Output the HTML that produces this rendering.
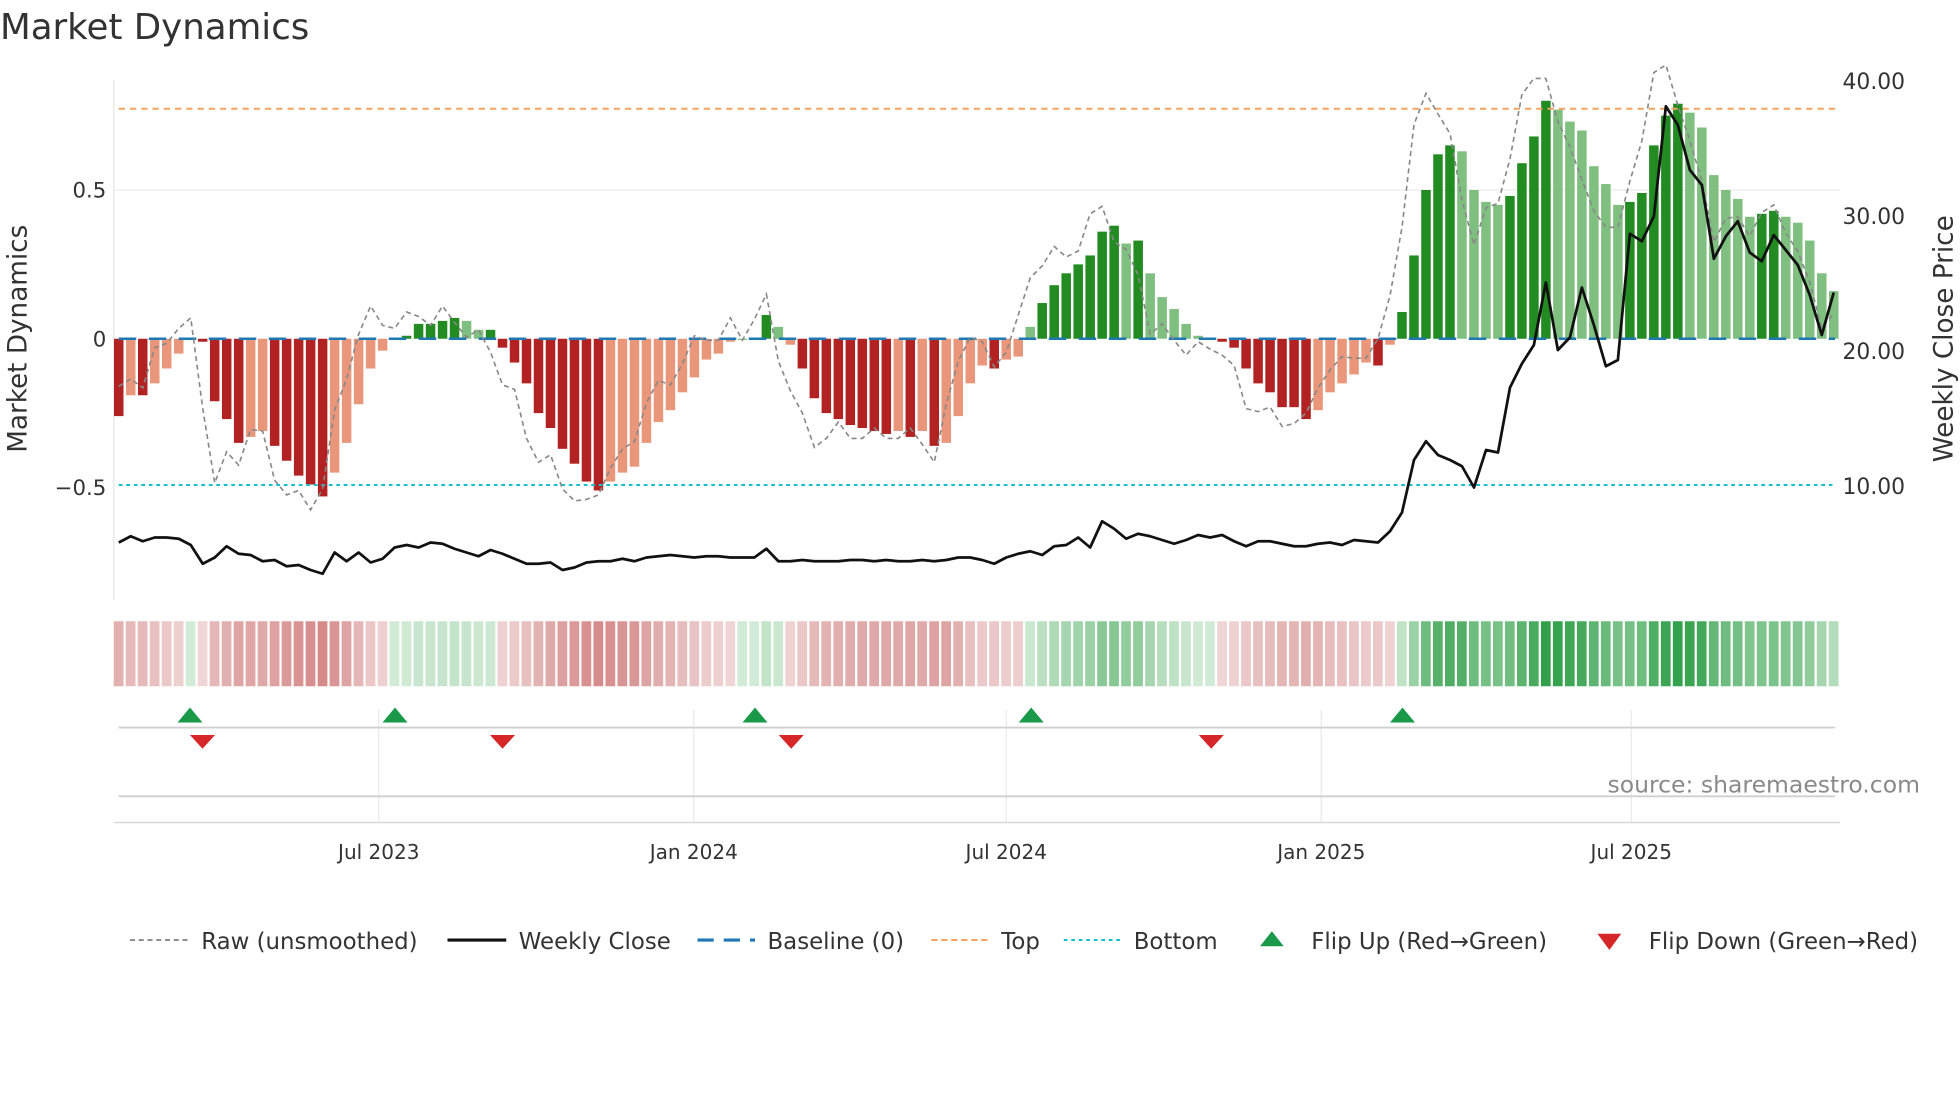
<!DOCTYPE html>
<html><head><meta charset="utf-8"><style>
html,body{margin:0;padding:0;background:#fff;width:1960px;height:1102px;overflow:hidden}
svg{display:block}
text{font-family:"DejaVu Sans","Liberation Sans",sans-serif;fill:#333}
</style></head><body>
<svg id="s" width="1960" height="1102" viewBox="0 0 1568 881.6" xmlns="http://www.w3.org/2000/svg">
<rect width="1568" height="882" fill="#fff"/>
<text x="0" y="31" font-size="28.5">Market Dynamics</text>
<line x1="91" y1="64" x2="91" y2="480" stroke="#e6e6e6" stroke-width="1"/>
<line x1="91" y1="152" x2="1472" y2="152" stroke="#ececec" stroke-width="1"/>
<g id="bars"></g>
<line x1="95" y1="271" x2="1468" y2="271" stroke="#1f77b4" stroke-width="2" stroke-dasharray="14,10"/>
<line x1="95" y1="87" x2="1468" y2="87" stroke="#f4a460" stroke-width="1.6" stroke-dasharray="5,4"/>
<line x1="95" y1="388" x2="1468" y2="388" stroke="#17becf" stroke-width="1.6" stroke-dasharray="3,3"/>
<g id="lines"></g>
<text x="85" y="158" font-size="17" text-anchor="end">0.5</text>
<text x="85" y="277" font-size="17" text-anchor="end">0</text>
<text x="85" y="396" font-size="17" text-anchor="end">−0.5</text>
<text x="1474" y="71" font-size="17.5">40.00</text>
<text x="1474" y="179" font-size="17.5">30.00</text>
<text x="1474" y="287" font-size="17.5">20.00</text>
<text x="1474" y="395" font-size="17.5">10.00</text>
<text transform="translate(21,271) rotate(-90)" font-size="21" text-anchor="middle">Market Dynamics</text>
<text transform="translate(1562,271) rotate(-90)" font-size="21" text-anchor="middle">Weekly Close Price</text>
<g id="strip"></g>
<g stroke="#eaeaea" stroke-width="1">
<line x1="303" y1="568" x2="303" y2="658"/><line x1="555" y1="568" x2="555" y2="658"/><line x1="805" y1="568" x2="805" y2="658"/><line x1="1057" y1="568" x2="1057" y2="658"/><line x1="1305" y1="568" x2="1305" y2="658"/>
</g>
<line x1="95" y1="582" x2="1468" y2="582" stroke="#d0d0d0" stroke-width="1.5"/>
<line x1="95" y1="637" x2="1468" y2="637" stroke="#d0d0d0" stroke-width="1.5"/>
<line x1="91" y1="658" x2="1472" y2="658" stroke="#d8d8d8" stroke-width="1.2"/>
<g id="marks"></g>
<text x="1536" y="634" font-size="18.8" text-anchor="end" style="fill:#8a8a8a">source: sharemaestro.com</text>
<g font-size="16" text-anchor="middle">
<text x="303" y="687">Jul 2023</text><text x="555" y="687">Jan 2024</text><text x="805" y="687">Jul 2024</text><text x="1057" y="687">Jan 2025</text><text x="1305" y="687">Jul 2025</text>
</g>
<g font-size="18.3">
<line x1="104" y1="752" x2="150" y2="752" stroke="#888" stroke-width="1.5" stroke-dasharray="4,3"/>
<text x="161" y="759">Raw (unsmoothed)</text>
<line x1="358" y1="752" x2="405" y2="752" stroke="#111" stroke-width="2.5"/>
<text x="415" y="759">Weekly Close</text>
<line x1="558" y1="752" x2="604" y2="752" stroke="#1f77b4" stroke-width="2.5" stroke-dasharray="13,8"/>
<text x="614" y="759">Baseline (0)</text>
<line x1="745" y1="752" x2="791" y2="752" stroke="#f4a460" stroke-width="1.6" stroke-dasharray="5,3"/>
<text x="801" y="759">Top</text>
<line x1="851" y1="752" x2="897" y2="752" stroke="#17becf" stroke-width="1.6" stroke-dasharray="3,3"/>
<text x="907" y="759">Bottom</text>
<polygon points="1008,757 1027,757 1017.5,745" fill="#1a9a49"/>
<text x="1049" y="759">Flip Up (Red→Green)</text>
<polygon points="1278,747 1297,747 1287.5,760" fill="#d62728"/>
<text x="1319" y="759">Flip Down (Green→Red)</text>
</g>
</svg>
<script>
var v=[-0.26,-0.19,-0.19,-0.15,-0.1,-0.05,0,-0.01,-0.21,-0.27,-0.35,-0.33,-0.31,-0.36,-0.41,-0.46,-0.49,-0.53,-0.45,-0.35,-0.22,-0.1,-0.04,0,0.01,0.05,0.05,0.06,0.07,0.06,0.03,0.03,-0.03,-0.08,-0.15,-0.25,-0.3,-0.37,-0.42,-0.48,-0.51,-0.48,-0.45,-0.43,-0.35,-0.28,-0.24,-0.18,-0.13,-0.07,-0.05,-0.01,0,0,0.08,0.04,-0.02,-0.1,-0.2,-0.25,-0.27,-0.29,-0.3,-0.31,-0.32,-0.31,-0.33,-0.31,-0.36,-0.35,-0.26,-0.15,-0.09,-0.1,-0.07,-0.06,0.04,0.12,0.18,0.22,0.25,0.28,0.36,0.38,0.32,0.33,0.22,0.14,0.1,0.05,0.01,0,-0.01,-0.03,-0.1,-0.15,-0.18,-0.23,-0.23,-0.27,-0.24,-0.18,-0.15,-0.12,-0.08,-0.09,-0.02,0.09,0.28,0.5,0.62,0.65,0.63,0.5,0.46,0.45,0.48,0.59,0.68,0.8,0.77,0.73,0.7,0.58,0.52,0.45,0.46,0.49,0.65,0.75,0.79,0.76,0.71,0.55,0.5,0.47,0.41,0.42,0.43,0.41,0.39,0.33,0.22,0.16];
var n=v.length,ns="http://www.w3.org/2000/svg";
function X(i){return 95+i*(1372/(n-1));}
function Y(a){return 271-a*238;}
function el(g,t,a){var e=document.createElementNS(ns,t);for(var k in a)e.setAttribute(k,a[k]);document.getElementById(g).appendChild(e);}
for(var i=0;i<n;i++){var a=v[i],p=i>0?v[i-1]:0,dark=Math.abs(a)>=Math.abs(p)-0.001;
var c=a>=0?(dark?"#228b22":"#7fbf7f"):(dark?"#b22222":"#e9967a");
var y0=Y(Math.max(a,0)),h=Math.abs(a)*238;
el("bars","rect",{x:X(i)-3.8,y:y0,width:7.6,height:Math.max(h,1),fill:c});
var t=Math.min(Math.abs(a)/0.8,1),sc;
if(a<0){var s=Math.min(Math.abs(a)/0.55,1);sc="rgb("+Math.round(240-28*s)+","+Math.round(214-80*s)+","+Math.round(214-80*s)+")";}
else{sc="rgb("+Math.round(210-160*t)+","+Math.round(235-75*t)+","+Math.round(214-140*t)+")";}
el("strip","rect",{x:X(i)-4,y:497,width:7.8,height:52,fill:sc});}
var raw=[];for(var i=0;i<n;i++){var a=v[Math.max(i-1,0)],b=v[Math.min(i+1,n-1)];var r=v[i]+1.0*(b-a)+(i%3==0?0.03:-0.015);raw.push(X(i).toFixed(1)+","+Y(r).toFixed(1));}
el("lines","polyline",{points:raw.join(" "),fill:"none",stroke:"#888","stroke-width":1.3,"stroke-dasharray":"4,3"});
var pr=[434,429,433,430,430,431,436,451,446,437,443,444,449,448,453,452,456,459,442,449,442,450,447,438,436,438,434,435,439,442,445,440,443,447,451,451,450,456,454,450,449,449,447,449,446,445,444,445,446,445,445,446,446,446,439,449,449,448,449,449,449,448,448,449,448,449,449,448,449,448,446,446,448,451,446,443,441,444,437,436,430,438,417,423,431,427,429,432,435,432,428,430,428,433,437,433,433,435,437,437,435,434,436,432,433,434,425,410,368,353,364,368,373,390,360,362,310,291,276,226,280,270,230,260,293,288,187,193,173,85,100,136,148,207,189,177,202,209,188,200,212,236,268,234];
var pp=[];for(var i=0;i<pr.length;i++)pp.push(X(i).toFixed(1)+","+pr[i]);
el("lines","polyline",{points:pp.join(" "),fill:"none",stroke:"#111","stroke-width":2.2,"stroke-linejoin":"round"});
[152,316,604,825,1122].forEach(function(x){el("marks","polygon",{points:(x-10)+",578 "+(x+10)+",578 "+x+",566",fill:"#1a9a49"});});
[162,402,633,969].forEach(function(x){el("marks","polygon",{points:(x-10)+",588 "+(x+10)+",588 "+x+",599",fill:"#d62728"});});
</script>
</body></html>
